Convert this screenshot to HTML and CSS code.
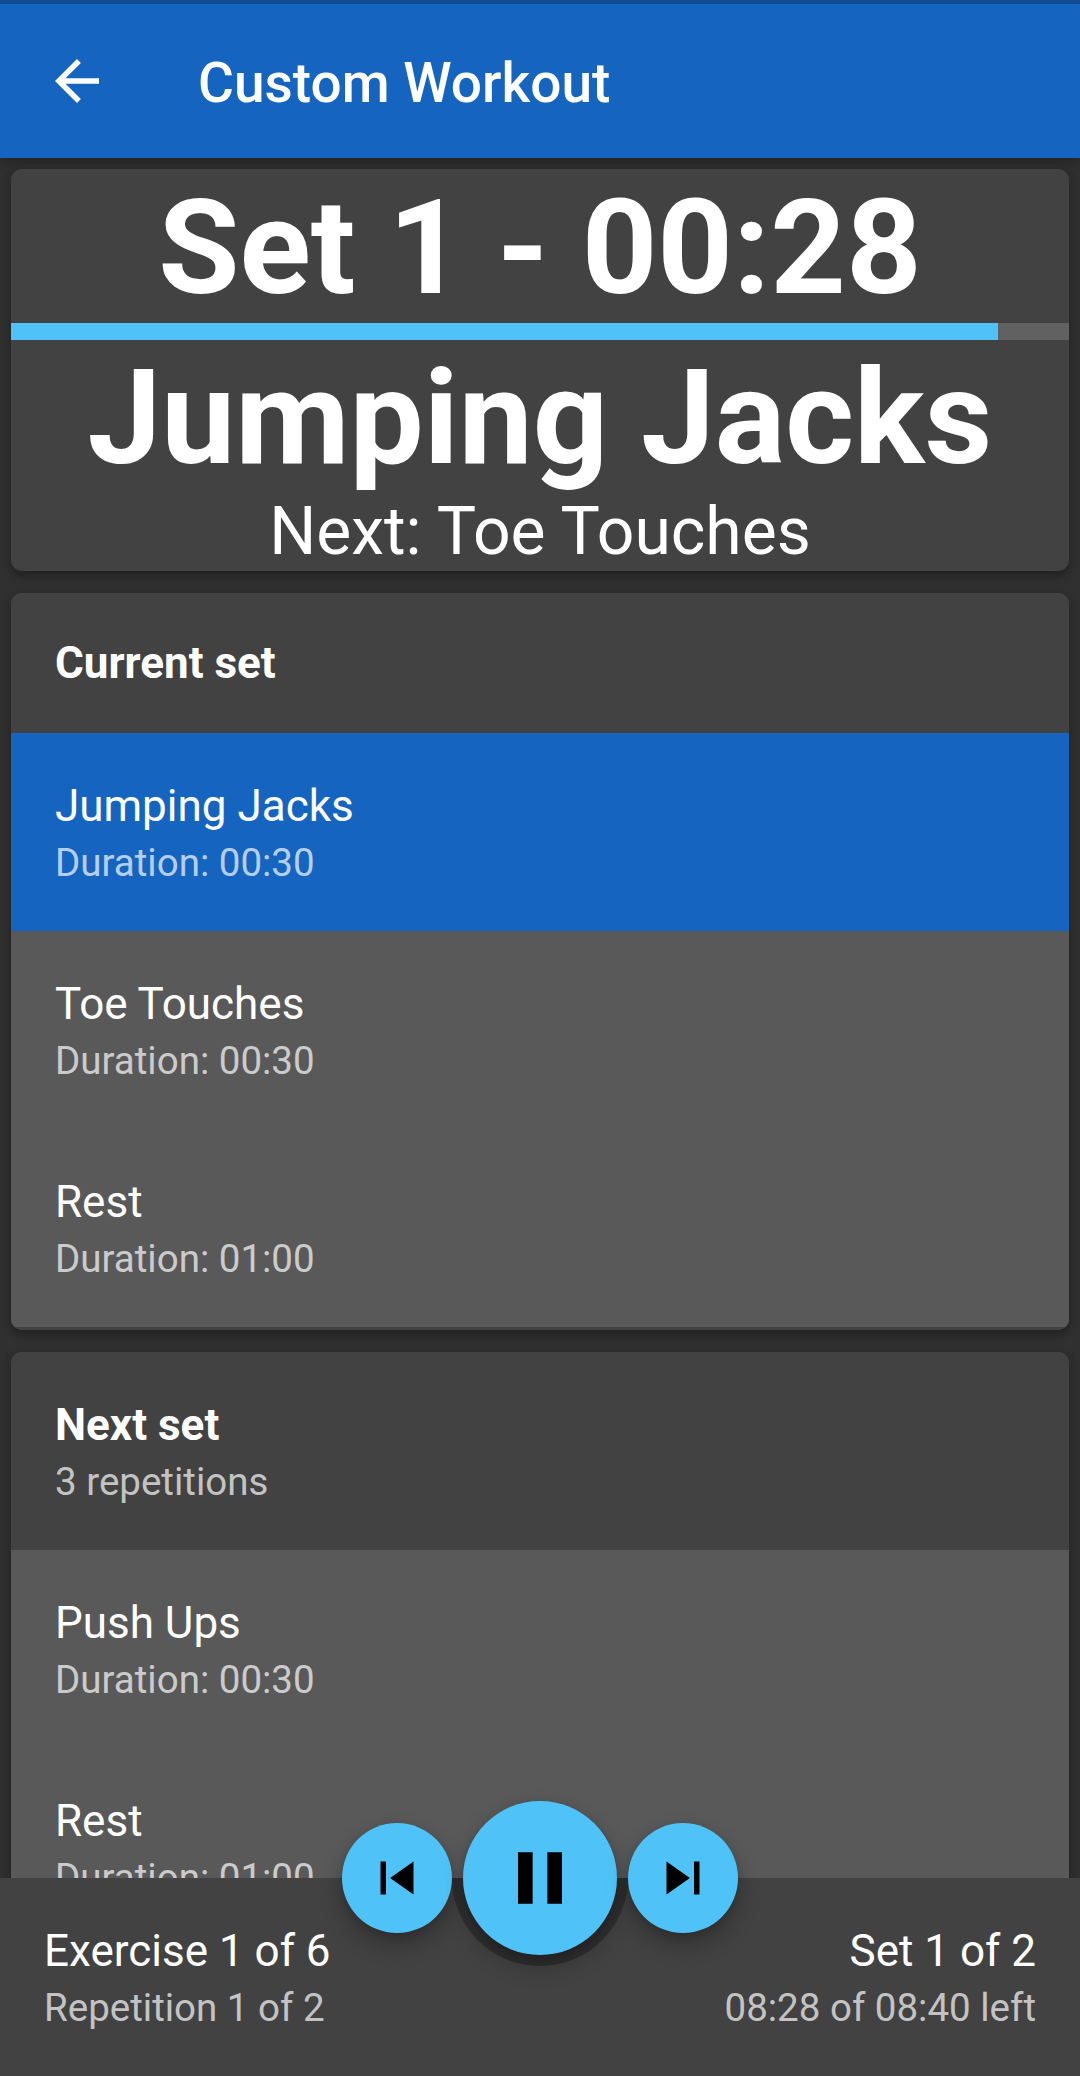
FILE: index.html
```html
<!DOCTYPE html>
<html lang="en">
<head>
<meta charset="utf-8">
<title>Custom Workout</title>
<link rel="stylesheet" href="styles.css">
</head>
<body>
<div class="screen">
  <header class="app-bar">
    <svg class="back" viewBox="0 0 24 24"><path d="M20 11H7.83l5.59-5.59L12 4l-8 8 8 8 1.41-1.41L7.83 13H20v-2z"/></svg>
    <h1 class="app-title">Custom Workout</h1>
  </header>
  <main class="content">
    <section class="card timer">
      <div class="timer-count">Set 1 - 00:28</div>
      <div class="progress"><div class="progress-value" style="width:93.33%"></div></div>
      <div class="timer-name">Jumping Jacks</div>
      <div class="timer-next">Next: Toe Touches</div>
    </section>
    <section class="card set">
      <div class="row head compact"><div class="title">Current set</div></div>
      <div class="row active"><div class="title">Jumping Jacks</div><div class="sub">Duration: 00:30</div></div>
      <div class="row"><div class="title">Toe Touches</div><div class="sub">Duration: 00:30</div></div>
      <div class="row"><div class="title">Rest</div><div class="sub">Duration: 01:00</div></div>
    </section>
    <section class="card set">
      <div class="row head"><div class="title">Next set</div><div class="sub">3 repetitions</div></div>
      <div class="row"><div class="title">Push Ups</div><div class="sub">Duration: 00:30</div></div>
      <div class="row"><div class="title">Rest</div><div class="sub">Duration: 01:00</div></div>
    </section>
  </main>
  <footer class="bottom-bar">
    <div class="notch"><div class="notch-cut"></div></div>
    <div class="status"><div class="title">Exercise 1 of 6</div><div class="sub">Repetition 1 of 2</div></div>
    <div class="status end"><div class="title">Set 1 of 2</div><div class="sub">08:28 of 08:40 left</div></div>
    <div class="controls">
      <button class="fab" aria-label="Previous"><svg viewBox="0 0 24 24"><path d="M6 6h2v12H6zm3.500 6l8.500 6V6z"/></svg></button>
      <button class="fab large" aria-label="Pause"><svg viewBox="0 0 24 24"><path d="M6 19h4V5H6v14zm8-14v14h4V5h-4z"/></svg></button>
      <button class="fab" aria-label="Next"><svg viewBox="0 0 24 24"><path d="M6 18l8.500-6L6 6v12zM16 6v12h2V6h-2z"/></svg></button>
    </div>
  </footer>
</div>
</body>
</html>
```

FILE: styles.css
```css
* {
  box-sizing: border-box;
}

body {
  margin: 0;
  background: #303030;
  color: #fff;
  font-family: Roboto, "Liberation Sans", sans-serif;
}

.screen {
  display: flex;
  flex-direction: column;
  height: 2076px;
  overflow: hidden;
}

.app-bar {
  display: flex;
  align-items: center;
  flex: none;
  height: 158px;
  padding-left: 44px;
  gap: 88px;
  border-top: 4px solid #104c90;
  background: #1565c0;
  box-shadow: 0 5px 11px rgba(0, 0, 0, .25);
}

.back {
  width: 66px;
  height: 66px;
  fill: #fff;
}

.app-title {
  margin: 0;
  padding-top: 3px;
  font-size: 55px;
  font-weight: 500;
  line-height: 64px;
}

.content {
  display: flex;
  flex-direction: column;
  flex: 1;
  min-height: 0;
  gap: 22px;
  padding: 11px 11px 0;
  overflow: hidden;
}

.card {
  flex: none;
  border-radius: 11px;
  background: #424242;
  box-shadow: 0 6px 9px rgba(0, 0, 0, .24), 0 1px 8px rgba(0, 0, 0, .1);
}

.timer {
  height: 402px;
  text-align: center;
}

.timer-count,
.timer-name {
  height: 154px;
  padding-top: 3px;
  font-size: 132px;
  font-weight: 700;
  line-height: 151px;
}

.timer-count {
  padding-top: 4px;
  line-height: 150px;
}

.progress {
  height: 17px;
  background: #616161;
}

.progress-value {
  height: 100%;
  background: #4fc3f7;
}

.timer-next {
  font-size: 66px;
  line-height: 75px;
}

.set {
  padding-bottom: 3px;
  overflow: hidden;
}

.row {
  height: 198px;
  padding: 45px 44px 0;
  background: #595959;
}

.row.head {
  background: #424242;
}

.row.compact {
  height: 140px;
  padding-top: 42px;
}

.row.active {
  background: #1565c0;
}

.title {
  font-size: 44px;
  line-height: 56px;
}

.head .title {
  font-weight: 700;
}

.sub {
  color: rgba(255, 255, 255, .7);
  font-size: 38.5px;
  line-height: 58px;
}

.bottom-bar {
  position: relative;
  display: flex;
  justify-content: space-between;
  flex: none;
  height: 198px;
  padding: 45px 44px 0;
  background: #424242;
}

.end {
  text-align: right;
}

/* Half-circle cut-out around the pause button */
.notch {
  position: absolute;
  top: 0;
  left: 50%;
  width: 176px;
  height: 88px;
  overflow: hidden;
  transform: translateX(-50%);
}

.notch-cut {
  height: 88px;
  border-radius: 0 0 88px 88px;
  background: #303030;
}

.controls {
  position: absolute;
  top: 0;
  left: 50%;
  display: flex;
  align-items: center;
  gap: 11px;
  transform: translate(-50%, -50%);
}

.fab {
  display: flex;
  align-items: center;
  justify-content: center;
  width: 110px;
  height: 110px;
  padding: 0;
  border: 0;
  border-radius: 50%;
  background: #4fc3f7;
  box-shadow: 0 12px 22px rgba(0, 0, 0, .25), 0 3px 8px rgba(0, 0, 0, .12);
}

.fab svg {
  width: 66px;
  height: 66px;
}

.fab.large {
  width: 154px;
  height: 154px;
}

.fab.large svg {
  width: 88px;
  height: 88px;
}
```
